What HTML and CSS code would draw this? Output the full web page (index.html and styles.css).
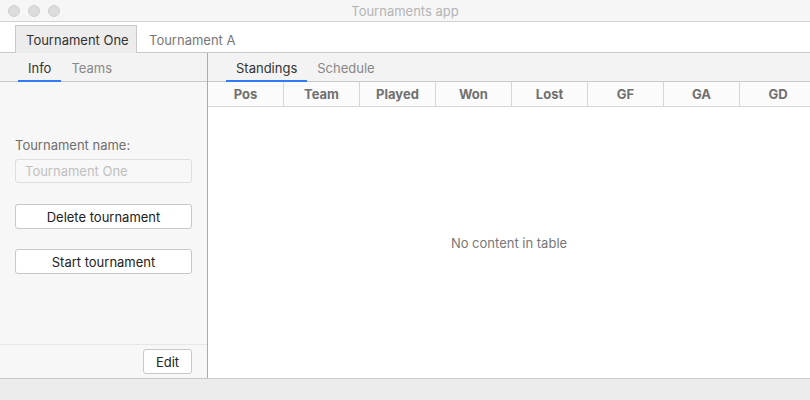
FILE: index.html
```html
<!DOCTYPE html>
<html>
<head>
<meta charset="utf-8">
<link rel="stylesheet" href="styles.css">
</head>
<body>
<div class="window">
  <div class="titlebar">
    <div class="lights"><span class="light"></span><span class="light"></span><span class="light"></span></div>
    <div class="title">Tournaments app</div>
  </div>
  <div class="doc-tabs">
    <div class="doc-tab active">Tournament One</div>
    <div class="doc-tab">Tournament A</div>
  </div>
  <div class="main">
    <div class="left">
      <div class="subtabs">
        <div class="subtab active">Info</div>
        <div class="subtab">Teams</div>
      </div>
      <div class="left-body">
        <div class="label">Tournament name:</div>
        <div class="field">Tournament One</div>
        <div class="btn wide">Delete tournament</div>
        <div class="btn wide">Start tournament</div>
      </div>
      <div class="left-footer">
        <div class="btn small">Edit</div>
      </div>
    </div>
    <div class="right">
      <div class="subtabs">
        <div class="subtab active">Standings</div>
        <div class="subtab">Schedule</div>
      </div>
      <div class="table-head">
        <div class="th">Pos</div>
        <div class="th">Team</div>
        <div class="th">Played</div>
        <div class="th">Won</div>
        <div class="th">Lost</div>
        <div class="th">GF</div>
        <div class="th">GA</div>
        <div class="th">GD</div>
      </div>
      <div class="table-body">No content in table</div>
    </div>
  </div>
  <div class="statusbar"></div>
</div>
</body>
</html>
```
FILE: styles.css
```css
* { box-sizing: border-box; }
html, body { margin: 0; padding: 0; }
body {
  font-family: "Inter", "Noto Sans", "Liberation Sans", sans-serif;
  font-size: 13px;
  color: #333;
  background: #fff;
}
.window {
  width: 810px;
  height: 400px;
  display: flex;
  flex-direction: column;
  overflow: hidden;
}
.titlebar {
  height: 22px;
  flex: none;
  background: #f6f6f6;
  border-bottom: 1px solid #d2d2d2;
  display: flex;
  align-items: center;
  position: relative;
}
.lights {
  display: flex;
  gap: 8px;
  padding-left: 8px;
}
.light {
  width: 12px;
  height: 12px;
  border-radius: 50%;
  background: #dcdcdc;
  border: 1px solid #d0d0d0;
}
.title {
  position: absolute;
  left: 0;
  right: 0;
  text-align: center;
  color: #b4b4b4;
  font-size: 13px;
}
.doc-tabs {
  height: 31px;
  flex: none;
  display: flex;
  align-items: flex-end;
  padding-left: 15px;
  border-bottom: 1px solid #c9c9c9;
  background: #fff;
}
.doc-tab {
  height: 28px;
  margin-bottom: -1px;
  padding: 0 11px;
  display: flex;
  align-items: center;
  color: #777;
  border: 1px solid transparent;
  border-bottom: none;
}
.doc-tab.active {
  background: #ececec;
  border-color: #c9c9c9;
  color: #333;
  width: 122px;
  padding: 0 0 0 10px;
}
.main {
  flex: 1;
  display: flex;
  min-height: 0;
}
.left {
  width: 208px;
  flex: none;
  background: #f7f7f7;
  border-right: 1px solid #ababab;
  display: flex;
  flex-direction: column;
}
.subtabs {
  height: 29px;
  flex: none;
  display: flex;
  background: #f3f3f3;
  border-bottom: 1px solid #c9c9c9;
  padding-left: 18px;
}
.subtab {
  padding: 2px 10px 0 10px;
  display: flex;
  align-items: center;
  color: #888;
  margin-bottom: -1px;
  border-bottom: 2px solid transparent;
}
.subtab.active {
  color: #333;
  border-bottom-color: #2f7cf6;
}
.left-body {
  flex: 1;
  padding: 55px 15px 0 15px;
  display: flex;
  flex-direction: column;
}
.label {
  color: #6e6e6e;
  line-height: 16px;
  margin-bottom: 6px;
}
.field {
  height: 24px;
  border: 1px solid #dedede;
  border-radius: 3px;
  background: #f8f8f8;
  color: #c0c0c0;
  padding-left: 9px;
  display: flex;
  align-items: center;
  margin-bottom: 21px;
}
.btn {
  height: 25px;
  border: 1px solid #c8c8c8;
  border-radius: 3px;
  background: #fff;
  color: #222;
  display: flex;
  align-items: center;
  justify-content: center;
}
.btn.wide { margin-bottom: 20px; }
.left-footer {
  height: 34px;
  flex: none;
  border-top: 1px solid #e6e6e6;
  display: flex;
  justify-content: flex-end;
  padding: 4px 15px 0 0;
}
.btn.small { width: 49px; }
.right {
  flex: 1;
  display: flex;
  flex-direction: column;
  min-width: 0;
  overflow: hidden;
}
.table-head {
  height: 25px;
  flex: none;
  display: grid;
  grid-template-columns: repeat(8, 76px);
  border-bottom: 1px solid #d6d6d6;
  background: #fbfbfb;
}
.th {
  border-right: 1px solid #d6d6d6;
  display: flex;
  align-items: center;
  justify-content: center;
  font-weight: 700;
  color: #707070;
}
.th:last-child { border-right: none; }
.table-body {
  flex: 1;
  background: #fff;
  display: flex;
  align-items: center;
  justify-content: center;
  color: #777;
}
.statusbar {
  height: 22px;
  flex: none;
  background: #ececec;
  border-top: 1px solid #c9c9c9;
}
```
